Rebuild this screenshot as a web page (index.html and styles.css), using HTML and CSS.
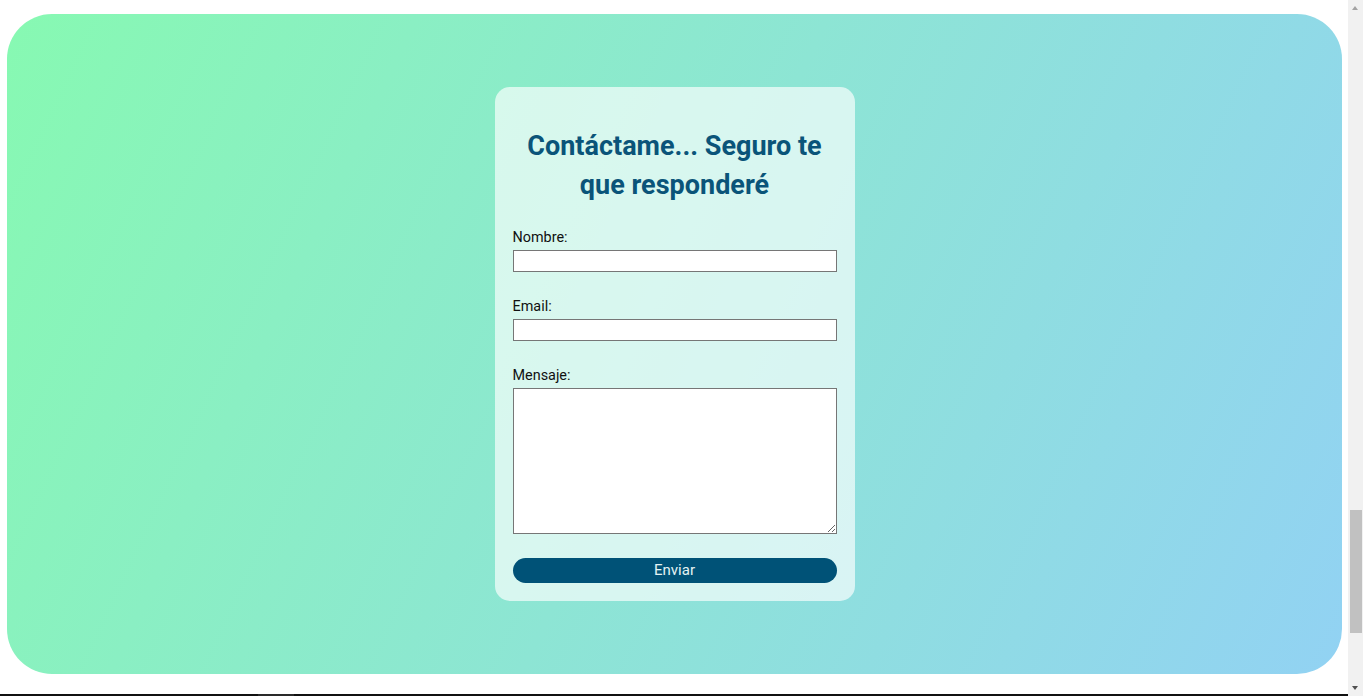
FILE: index.html
```html
<!DOCTYPE html>
<html lang="es">
<head>
<meta charset="utf-8">
<title>Contacto</title>
<link rel="stylesheet" href="styles.css">
</head>
<body>
<section class="contact">
  <form class="card">
    <h2 class="title">Contáctame... Seguro te que responderé</h2>
    <label class="label" for="nombre">Nombre:</label>
    <input class="field" type="text" id="nombre">
    <label class="label" for="email">Email:</label>
    <input class="field" type="email" id="email">
    <label class="label" for="mensaje">Mensaje:</label>
    <textarea class="area" id="mensaje"></textarea>
    <button class="send" type="submit">Enviar</button>
  </form>
</section>
<footer class="footer"><span class="footer-mark"></span></footer>
<div class="scrollbar" aria-hidden="true">
  <span class="arrow arrow-up"></span>
  <span class="thumb"></span>
  <span class="arrow arrow-down"></span>
</div>
</body>
</html>
```
FILE: styles.css
```css
html, body {
  margin: 0;
  padding: 0;
  background: #ffffff;
  font-family: Roboto, "Liberation Sans", sans-serif;
}

.contact {
  height: 660px;
  margin: 14px 21px 20px 7px;
  border-radius: 45px;
  background: linear-gradient(115deg, #87f9b2 0%, #8de5d4 50%, #92d2f3 100%);
  display: flex;
  align-items: center;
  justify-content: center;
}

.card {
  box-sizing: border-box;
  width: 360px;
  padding: 18px;
  border-radius: 15px;
  background: rgba(255, 255, 255, 0.66);
  display: flex;
  flex-direction: column;
}

.title {
  margin: 21.6px 0 24px;
  font-size: 27px;
  line-height: 39px;
  font-weight: 700;
  color: #0a5479;
  text-align: center;
}

.label {
  display: block;
  font-size: 14.4px;
  line-height: 17px;
  color: #111111;
  margin-bottom: 4.4px;
}

.field {
  box-sizing: border-box;
  display: block;
  width: 100%;
  height: 22px;
  margin: 0 0 25.6px;
  border: 1px solid #767676;
  background: #ffffff;
  padding: 1px 3px;
}

.area {
  box-sizing: border-box;
  display: block;
  width: 100%;
  height: 146px;
  margin: 0 0 24px;
  border: 1px solid #767676;
  background: #ffffff;
  resize: both;
}

.send {
  display: block;
  width: 100%;
  height: 25px;
  border: none;
  border-radius: 13px;
  background: #005277;
  color: #e4f3f3;
  font-family: Roboto, "Liberation Sans", sans-serif;
  font-size: 15px;
  padding: 0;
}

.footer {
  height: 300px;
  background: #111111;
}

.footer-mark {
  display: block;
  margin-left: 258px;
  width: 36px;
  height: 40px;
  background: #2a2a2a;
}

.scrollbar {
  position: fixed;
  top: 0;
  right: 0;
  width: 15px;
  height: 100%;
  background: #f1f1f1;
}

.thumb {
  position: absolute;
  left: 2px;
  right: 1px;
  top: 510px;
  height: 123px;
  background: #c1c1c1;
}

.arrow {
  position: absolute;
  left: 4px;
  width: 0;
  height: 0;
  border-left: 3.5px solid transparent;
  border-right: 3.5px solid transparent;
}

.arrow-up {
  top: 6px;
  border-bottom: 4px solid #a3a3a3;
}

.arrow-down {
  bottom: 6px;
  border-top: 4px solid #505050;
}
```
